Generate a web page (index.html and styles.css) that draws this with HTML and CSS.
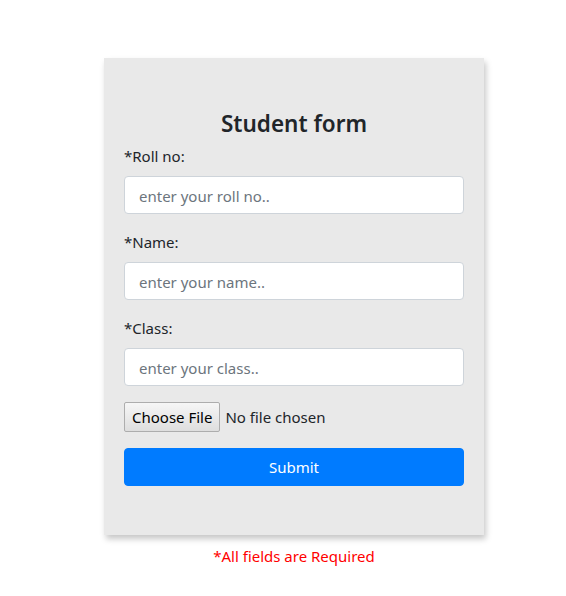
FILE: index.html
```html
<!DOCTYPE html>
<html lang="en">
<head>
<meta charset="utf-8">
<title>Student form</title>
<link rel="stylesheet" href="styles.css">
</head>
<body>
<main class="page">
  <form class="card">
    <h3 class="title">Student form</h3>
    <div class="group">
      <label class="label" for="roll">*Roll no:</label>
      <input class="control" id="roll" type="text" placeholder="enter your roll no..">
    </div>
    <div class="group">
      <label class="label" for="name">*Name:</label>
      <input class="control" id="name" type="text" placeholder="enter your name..">
    </div>
    <div class="group">
      <label class="label" for="cls">*Class:</label>
      <input class="control" id="cls" type="text" placeholder="enter your class..">
    </div>
    <div class="group">
      <input class="file" type="file">
    </div>
    <button class="submit" type="button">Submit</button>
  </form>
  <p class="note">*All fields are Required</p>
</main>
</body>
</html>
```
FILE: styles.css
```css
* { box-sizing: border-box; }
html, body { margin: 0; padding: 0; background: #fff; }
body {
  font-family: "Noto Sans", "Open Sans", sans-serif;
  font-size: 15px;
  line-height: 24px;
  color: #212529;
}
.page {
  width: 380px;
  margin: 58px 0 0 104px;
}
.card {
  background: #e9e9e9;
  padding: 49px 20px 49px;
  box-shadow: 2px 4px 6px rgba(0, 0, 0, 0.22);
}
.title {
  margin: 0 0 3px;
  text-align: center;
  font-size: 22.5px;
  line-height: 34px;
  font-weight: 600;
}
.group { margin-bottom: 16px; }
.label {
  display: block;
  margin-bottom: 8px;
  height: 24px;
}
.control {
  display: block;
  width: 100%;
  height: 38px;
  padding: 6px 14px 5px;
  font: inherit;
  color: #495057;
  background: #fff;
  border: 1px solid #ced4da;
  border-radius: 4px;
}
.control::placeholder { color: #6c757d; opacity: 1; }
.file {
  display: block;
  font: inherit;
  color: #212529;
  height: 30px;
}
.file::file-selector-button {
  font: inherit;
  height: 30px;
  padding: 0 7px;
  margin-right: 5px;
  color: #000;
  background: linear-gradient(#f6f6f6, #dedede);
  border: 1px solid #adadad;
  border-radius: 2px;
}
.submit {
  display: block;
  width: 100%;
  height: 38px;
  font: inherit;
  color: #fff;
  background: #007bff;
  border: 1px solid #007bff;
  border-radius: 4px;
}
.note {
  margin: 9px 0 0;
  text-align: center;
  color: #ff0000;
}
```
